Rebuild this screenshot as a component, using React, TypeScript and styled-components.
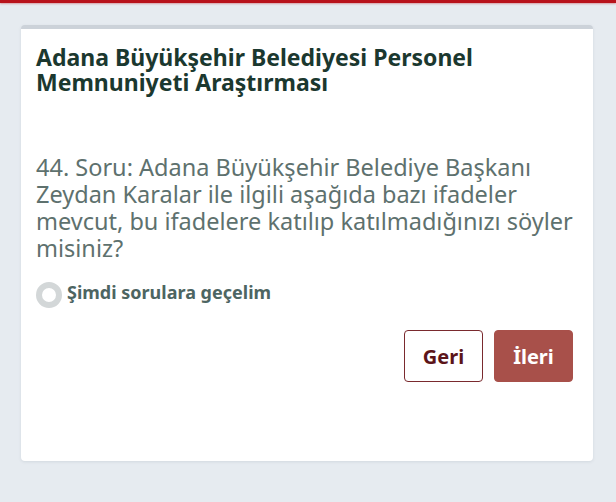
import React, { useState } from "react";
import styled, { createGlobalStyle } from "styled-components";

const GlobalStyle = createGlobalStyle`
  html, body {
    margin: 0;
    padding: 0;
    background: #e6ebf0;
  }
  body {
    font-family: "Noto Sans", "Open Sans", sans-serif;
  }
`;

const TopBar = styled.div`
  height: 3px;
  background: #b8121b;
  box-shadow: 0 1px 2px rgba(184, 18, 27, 0.35);
`;

const Page = styled.main`
  padding: 22px 23px 41px 21px;
`;

const Card = styled.section`
  background: #ffffff;
  border-top: 4px solid #ccd2d9;
  border-radius: 4px;
  box-shadow: 0 1px 3px rgba(120, 135, 150, 0.18);
  padding: 16px 20px 79px 15px;
`;

const Title = styled.h1`
  margin: 0;
  font-size: 23px;
  line-height: 24.5px;
  font-weight: 700;
  color: #1b382f;
`;

const Question = styled.p`
  margin: 60px 0 0;
  font-size: 23.5px;
  line-height: 27px;
  font-weight: 400;
  color: #5e716e;
`;

const Option = styled.label`
  display: flex;
  align-items: center;
  gap: 5px;
  margin-top: 20px;
  cursor: pointer;
`;

const RadioCircle = styled.span<{ $checked: boolean }>`
  box-sizing: border-box;
  width: 26px;
  height: 26px;
  border-radius: 50%;
  border: 6px solid #d3d7d8;
  background: ${(p) => (p.$checked ? "#4d6562" : "#ffffff")};
  flex: none;
`;

const OptionText = styled.span`
  font-size: 18px;
  line-height: 18px;
  padding-bottom: 6px;
  font-weight: 700;
  color: #4d6562;
`;

const Actions = styled.div`
  display: flex;
  justify-content: flex-end;
  gap: 11px;
  margin-top: 22px;
`;

const Button = styled.button<{ $primary?: boolean }>`
  box-sizing: border-box;
  width: 79px;
  height: 52px;
  padding: 0;
  border-radius: 4px;
  font-family: "Noto Sans", "Open Sans", sans-serif;
  font-size: 20px;
  font-weight: 700;
  cursor: pointer;
  border: 1.5px solid ${(p) => (p.$primary ? "#a8504a" : "#7a2a2e")};
  background: ${(p) => (p.$primary ? "#a8504a" : "#ffffff")};
  color: ${(p) => (p.$primary ? "#ffffff" : "#5c1419")};
`;

export default function App() {
  const [checked, setChecked] = useState(false);
  return (
    <>
      <GlobalStyle />
      <TopBar />
      <Page>
        <Card>
          <Title>
            Adana Büyükşehir Belediyesi Personel
            <br />
            Memnuniyeti Araştırması
          </Title>
          <Question>
            44. Soru: Adana Büyükşehir Belediye Başkanı Zeydan Karalar ile ilgili aşağıda bazı ifadeler
            mevcut, bu ifadelere katılıp katılmadığınızı söyler misiniz?
          </Question>
          <Option onClick={() => setChecked(!checked)}>
            <RadioCircle $checked={checked} />
            <OptionText>Şimdi sorulara geçelim</OptionText>
          </Option>
          <Actions>
            <Button type="button">Geri</Button>
            <Button type="button" $primary>
              İleri
            </Button>
          </Actions>
        </Card>
      </Page>
    </>
  );
}
